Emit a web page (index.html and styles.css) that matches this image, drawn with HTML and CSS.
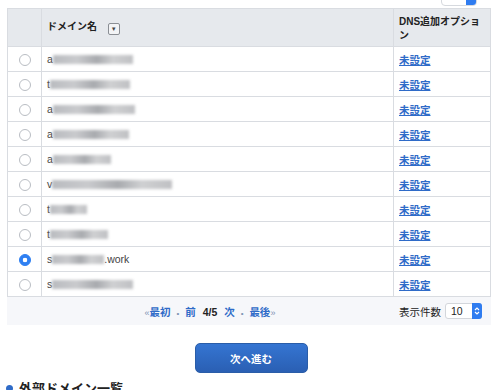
FILE: index.html
```html
<!DOCTYPE html>
<html lang="ja">
<head>
    <meta charset="UTF-8">
    <title>ドメイン選択</title>
    <link rel="stylesheet" href="styles.css">
</head>
<body>
    <div class="topbar">
        <div class="mini-select"><span class="mini-arrow"></span></div>
    </div>

    <div class="list-box">
        <table class="domain-table">
            <thead>
                <tr>
                    <th class="col-radio"></th>
                    <th class="col-name">ドメイン名 <span class="filter-btn">▼</span></th>
                    <th class="col-dns">DNS追加オプション</th>
                </tr>
            </thead>
            <tbody>
                <tr><td class="col-radio"><span class="radio"></span></td><td>a<span class="blur" style="width:80px"></span></td><td><a href="#">未設定</a></td></tr>
                <tr><td class="col-radio"><span class="radio"></span></td><td>t<span class="blur" style="width:80px"></span></td><td><a href="#">未設定</a></td></tr>
                <tr><td class="col-radio"><span class="radio"></span></td><td>a<span class="blur" style="width:82px"></span></td><td><a href="#">未設定</a></td></tr>
                <tr><td class="col-radio"><span class="radio"></span></td><td>a<span class="blur" style="width:76px"></span></td><td><a href="#">未設定</a></td></tr>
                <tr><td class="col-radio"><span class="radio"></span></td><td>a<span class="blur" style="width:58px"></span></td><td><a href="#">未設定</a></td></tr>
                <tr><td class="col-radio"><span class="radio"></span></td><td>v<span class="blur" style="width:120px"></span></td><td><a href="#">未設定</a></td></tr>
                <tr><td class="col-radio"><span class="radio"></span></td><td>t<span class="blur" style="width:37px"></span></td><td><a href="#">未設定</a></td></tr>
                <tr><td class="col-radio"><span class="radio"></span></td><td>t<span class="blur" style="width:58px"></span></td><td><a href="#">未設定</a></td></tr>
                <tr><td class="col-radio"><span class="radio checked"></span></td><td>s<span class="blur" style="width:52px"></span>.work</td><td><a href="#">未設定</a></td></tr>
                <tr><td class="col-radio"><span class="radio"></span></td><td>s<span class="blur" style="width:81px"></span></td><td><a href="#">未設定</a></td></tr>
            </tbody>
        </table>

        <div class="pager">
            <div class="pager-links">
                <span class="arrow">«</span><a href="#">最初</a>
                <span class="dot">•</span>
                <a href="#">前</a>
                <span class="page-num">4/5</span>
                <a href="#">次</a>
                <span class="dot">•</span>
                <a href="#">最後</a><span class="arrow">»</span>
            </div>
            <div class="per-page">
                表示件数
                <div class="select">10<span class="select-arrow">
                    <svg width="6" height="10" viewBox="0 0 6 10"><path d="M1 4 L3 2 L5 4 M1 6 L3 8 L5 6" fill="none" stroke="#fff" stroke-width="1.2"/></svg>
                </span></div>
            </div>
        </div>
    </div>

    <div class="actions">
        <button class="next-btn">次へ進む</button>
    </div>

    <h2 class="section-title"><span class="bullet"></span>外部ドメイン一覧</h2>
</body>
</html>
```

FILE: styles.css
```css
body {
    margin: 0;
    padding: 0 9px 0 7px;
    background: #fff;
    font-family: "Liberation Sans", "Noto Sans CJK JP", sans-serif;
    font-size: 11px;
    color: #222;
    overflow: hidden;
}
.topbar {
    height: 8px;
    position: relative;
}
.mini-select {
    position: absolute;
    right: 14px;
    top: -14px;
    width: 34px;
    height: 18px;
    border: 1px solid #d6d9de;
    border-radius: 4px;
    background: #fff;
    overflow: hidden;
}
.mini-arrow {
    position: absolute;
    right: 0;
    top: 0;
    width: 10px;
    height: 18px;
    background: #2f7cf0;
}
.list-box {
    background: #f6f7fa;
}
.domain-table {
    width: 100%;
    border-collapse: collapse;
    background: #fff;
}
.domain-table th,
.domain-table td {
    border: 1px solid #d9dce1;
    text-align: left;
    padding: 0 5px;
}
.domain-table th {
    background: #e6e9ed;
    height: 34px;
    font-weight: bold;
    font-size: 10px;
    line-height: 14px;
    vertical-align: middle;
}
.domain-table td {
    height: 24px;
}
.domain-table td.col-radio,
.domain-table th.col-radio {
    width: 33px;
    text-align: center;
    padding: 0;
}
.domain-table th.col-dns {
    width: 86px;
    padding-top: 3px;
}
.domain-table td:first-child + td {
    color: #444;
    font-size: 10.5px;
}
.domain-table a {
    color: #2f6bc8;
    font-weight: bold;
    font-size: 10.5px;
    font-family: "Noto Sans CJK JP", sans-serif;
}
.filter-btn {
    display: inline-block;
    width: 10px;
    height: 10px;
    margin-left: 8px;
    border: 1px solid #8a8e94;
    border-radius: 2px;
    background: #f3f4f6;
    font-size: 6px;
    line-height: 10px;
    text-align: center;
    color: #444;
    vertical-align: -1px;
}
.radio {
    display: inline-block;
    width: 10px;
    height: 10px;
    border: 1px solid #b9bdc3;
    border-radius: 50%;
    background: #fff;
    vertical-align: middle;
    box-sizing: content-box;
}
.radio.checked {
    border-color: #2f80f2;
    background: radial-gradient(circle, #fff 0 2px, #2f80f2 2.6px);
}
.blur {
    display: inline-block;
    height: 9px;
    vertical-align: -1px;
    background: linear-gradient(90deg, #b9bbbf, #c9cacd 30%, #a8aaae 55%, #cfd0d2 75%, #bfc0c3);
    filter: blur(1.6px);
}
.pager {
    display: flex;
    align-items: center;
    height: 28px;
}
.pager-links {
    flex: 1;
    text-align: center;
    padding-left: 14px;
    font-size: 10.5px;
}
.pager-links a {
    color: #2f6bc8;
    font-weight: bold;
    text-decoration: none;
    font-family: "Noto Sans CJK JP", sans-serif;
}
.pager-links .arrow {
    color: #7f93b3;
    font-size: 9px;
}
.pager-links .dot {
    color: #7f93b3;
    margin: 0 3px;
    font-size: 8px;
}
.page-num {
    font-weight: bold;
    margin: 0 4px;
}
.per-page {
    display: flex;
    align-items: center;
    gap: 4px;
    padding-right: 9px;
    font-size: 10.5px;
    font-family: "Noto Sans CJK JP", sans-serif;
}
.select {
    position: relative;
    width: 30px;
    height: 14px;
    padding-left: 5px;
    line-height: 14px;
    border: 1px solid #d3d6db;
    border-radius: 3px;
    background: #fff;
    font-family: "Liberation Sans", sans-serif;
    font-size: 10.5px;
}
.select-arrow {
    position: absolute;
    right: -1px;
    top: -1px;
    width: 10px;
    height: 16px;
    border-radius: 0 3px 3px 0;
    background: #2f7cf0;
    display: flex;
    align-items: center;
    justify-content: center;
}
.actions {
    display: flex;
    justify-content: center;
    padding-top: 18px;
    padding-left: 4px;
}
.next-btn {
    width: 113px;
    height: 30px;
    border: 1px solid #2a5da8;
    border-radius: 5px;
    background: linear-gradient(#3575d2, #2a5fb3);
    color: #fff;
    font-family: "Noto Sans CJK JP", sans-serif;
    font-weight: bold;
    font-size: 10.5px;
}
.section-title {
    margin: 7px 0 0 -1px;
    font-family: "Noto Sans CJK JP", sans-serif;
    font-size: 13px;
    line-height: 16px;
    display: flex;
    align-items: center;
    gap: 6px;
}
.bullet {
    width: 7px;
    height: 7px;
    border-radius: 50%;
    background: #2f6bc8;
}
```
